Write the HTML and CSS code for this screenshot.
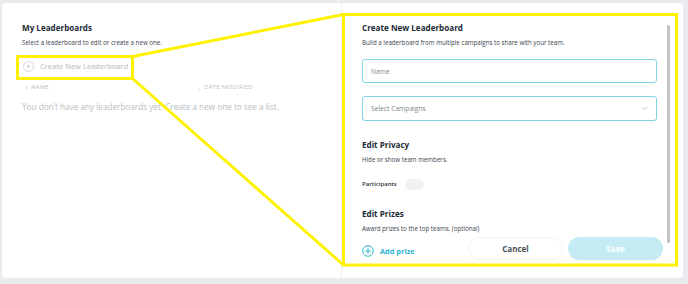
FILE: index.html
```html
<!DOCTYPE html>
<html>
<head>
<meta charset="utf-8">
<link rel="stylesheet" href="styles.css">
</head>
<body>
<div class="card">
  <section class="left">
    <h2 class="title">My Leaderboards</h2>
    <p class="sub">Select a leaderboard to edit or create a new one.</p>
    <div class="create">
      <svg class="plus" width="11" height="11" viewBox="0 0 11 11"><circle cx="5.5" cy="5.5" r="5" fill="none" stroke="#c9ccd0" stroke-width="0.8"/><path d="M5.5 3v5M3 5.5h5" stroke="#c9ccd0" stroke-width="0.8"/></svg>
      <span>Create New Leaderboard</span>
    </div>
    <div class="cols">
      <span class="col name"><i class="sort"></i>NAME</span>
      <span class="col date"><i class="sort low"></i>DATE MODIFIED</span>
    </div>
    <p class="empty">You don’t have any leaderboards yet. Create a new one to see a list.</p>
  </section>
  <section class="right">
    <div class="scroll">
      <h2 class="title">Create New Leaderboard</h2>
      <p class="sub">Build a leaderboard from multiple campaigns to share with your team.</p>
      <div class="field">Name</div>
      <div class="field select">Select Campaigns
        <svg width="7" height="5" viewBox="0 0 7 5"><path d="M0.5 1l3 2.5 3-2.5" fill="none" stroke="#b8bcc0" stroke-width="0.8"/></svg>
      </div>
      <h2 class="title sect">Edit Privacy</h2>
      <p class="sub">Hide or show team members.</p>
      <div class="toggle-row"><span>Participants</span><span class="toggle"></span></div>
      <h2 class="title sect2">Edit Prizes</h2>
      <p class="sub">Award prizes to the top teams. (optional)</p>
      <div class="footer">
        <div class="add">
          <svg width="12" height="12" viewBox="0 0 12 12"><circle cx="6" cy="6" r="5.3" fill="none" stroke="#2bb3cf" stroke-width="1"/><path d="M6 3v6M3 6h6" stroke="#2bb3cf" stroke-width="1"/></svg>
          <span>Add prize</span>
        </div>
        <div class="btns">
          <span class="btn cancel">Cancel</span>
          <span class="btn save">Save</span>
        </div>
      </div>
    </div>
    <div class="scrollbar"></div>
  </section>
</div>
<svg class="annot" width="688" height="284" viewBox="0 0 688 284">
  <g fill="none" stroke="#fff200" stroke-width="3">
    <rect x="17.5" y="56.5" width="115" height="22"/>
    <rect x="343.5" y="14.5" width="333" height="250.5"/>
    <path d="M132.5 56.5L343.5 14.5M132.5 78.5L343.5 265"/>
  </g>
</svg>
</body>
</html>
```

FILE: styles.css
```css
* { box-sizing: border-box; }
html, body { margin: 0; padding: 0; }
body {
  width: 688px;
  height: 284px;
  background: #e9ebee;
  font-family: "Open Sans", "Liberation Sans", sans-serif;
  color: #1e2c3a;
  position: relative;
  overflow: hidden;
}
.card {
  position: absolute;
  left: 2px; top: 3px;
  width: 681px; height: 275px;
  background: #fff;
  border-radius: 4px;
  display: flex;
}
.left {
  flex: 0 0 340px;
  border-right: 1px solid #eef0f2;
  padding: 19px 0 0 20px;
}
.right {
  flex: 1;
  display: flex;
  padding: 19px 0 0 20px;
}
.scroll { width: 295px; flex: 0 0 295px; }
.title {
  margin: 0;
  font-size: 8.1px;
  font-weight: 700;
  line-height: 12px;
  color: #1c2b38;
}
.sub {
  margin: 5px 0 0;
  font-size: 6.2px;
  line-height: 8px;
  color: #3a4450;
}
.create {
  display: flex;
  align-items: center;
  gap: 6px;
  height: 12px;
  margin-top: 13px;
  margin-left: 1px;
  font-size: 7.3px;
  font-weight: 600;
  color: #c6c9cd;
}
.cols {
  display: flex;
  margin-top: 11px;
  font-size: 6px;
  color: #b9bdc2;
  letter-spacing: 0.3px;
  height: 8px;
  line-height: 8px;
  align-items: center;
}
.col { display: flex; align-items: center; }
.name { margin-left: 4px; width: 172px; }
.sort {
  display: inline-block;
  width: 1px; height: 3px;
  background: #d6d9dc;
  margin-right: 4px;
}
.sort.low { width: 2px; height: 1px; margin-top: 4px; }
.empty {
  margin: 10px 0 0;
  font-size: 8.2px;
  line-height: 12px;
  color: #b9bdc2;
}
.field {
  height: 24px;
  margin-top: 12px;
  border: 1px solid #7dd5e6;
  border-radius: 3px;
  padding: 0 8px;
  display: flex;
  align-items: center;
  justify-content: space-between;
  font-size: 6.7px;
  color: #7f868d;
}
.field.select { margin-top: 13px; height: 25px; }
.sect { margin-top: 18px; }
.sect2 { margin-top: 18px; }
.toggle-row {
  display: flex;
  align-items: center;
  gap: 8px;
  height: 12px;
  margin-top: 14px;
  font-size: 6px;
  font-weight: 600;
  color: #2a3540;
}
.toggle {
  width: 19px; height: 11px;
  border-radius: 6px;
  background: #f0f1f3;
}
.footer {
  display: flex;
  justify-content: space-between;
  align-items: center;
  margin-top: 4px;
}
.add {
  display: flex;
  align-items: center;
  gap: 6px;
  margin-top: 5px;
  font-size: 7.4px;
  font-weight: 700;
  color: #2bb3cf;
}
.btns { display: flex; gap: 5px; margin-right: -6px; }
.btn {
  width: 95px;
  height: 23px;
  border-radius: 12px;
  display: flex;
  align-items: center;
  justify-content: center;
  font-size: 8px;
  font-weight: 700;
}
.cancel { border: 1px solid #f1f2f4; color: #4a525a; }
.save { background: #c5ebf4; color: #fff; }
.scrollbar {
  flex: 0 0 3px;
  height: 218px;
  margin: 3px 0 0 10px;
  background: #c4c4c4;
  border-radius: 1px;
}
.annot {
  position: absolute;
  left: 0; top: 0;
  pointer-events: none;
}
```
